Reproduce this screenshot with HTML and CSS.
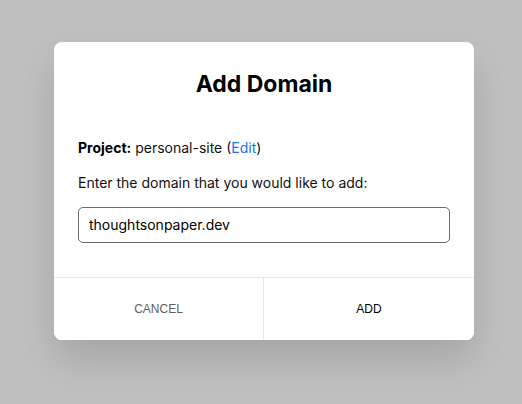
FILE: index.html
```html
<!DOCTYPE html>
<html>
<head>
<meta charset="utf-8">
<link rel="stylesheet" href="styles.css">
</head>
<body>
<div class="backdrop">
  <div class="modal">
    <div class="body">
      <h1 class="title">Add Domain</h1>
      <p class="project"><strong>Project:</strong> personal-site (<a class="link" href="#">Edit</a>)</p>
      <p class="prompt">Enter the domain that you would like to add:</p>
      <div class="input">thoughtsonpaper.dev</div>
    </div>
    <div class="actions">
      <button class="btn cancel">CANCEL</button>
      <button class="btn add">ADD</button>
    </div>
  </div>
</div>
</body>
</html>
```
FILE: styles.css
```css
html, body {
  margin: 0;
  padding: 0;
  background: #c0c0c0;
  font-family: Inter, "Noto Sans", sans-serif;
}
.backdrop {
  width: 522px;
  height: 404px;
  padding-top: 42px;
  padding-left: 54px;
  box-sizing: border-box;
}
.modal {
  width: 420px;
  background: #fff;
  border-radius: 8px;
  box-shadow: 0 20px 40px rgba(0, 0, 0, 0.14);
  overflow: hidden;
}
.body {
  padding: 27px 24px 34px;
}
.title {
  margin: 0;
  text-align: center;
  font-size: 23px;
  font-weight: 700;
  line-height: 30px;
  color: #000;
}
.project {
  margin: 39px 0 0;
  font-size: 14px;
  line-height: 20px;
  color: #111;
}
.project strong { font-weight: 700; color: #000; }
.link { color: #1a73e8; text-decoration: none; }
.prompt {
  margin: 15px 0 0;
  font-size: 14px;
  line-height: 20px;
  color: #111;
}
.input {
  margin-top: 14px;
  height: 36px;
  box-sizing: border-box;
  border: 1px solid #6b6b6b;
  border-radius: 5px;
  padding: 0 10px;
  font-size: 14px;
  line-height: 34px;
  color: #000;
}
.actions {
  display: grid;
  grid-template-columns: 210px 1fr;
  border-top: 1px solid #e6e6e6;
  height: 62px;
}
.btn {
  border: 0;
  background: #fff;
  font-family: "Liberation Sans", Arial, sans-serif;
  font-size: 12px;
  padding: 0;
  margin: 0;
}
.cancel {
  color: #5f5f5f;
  border-right: 1px solid #e6e6e6;
}
.add { color: #000; }
```
